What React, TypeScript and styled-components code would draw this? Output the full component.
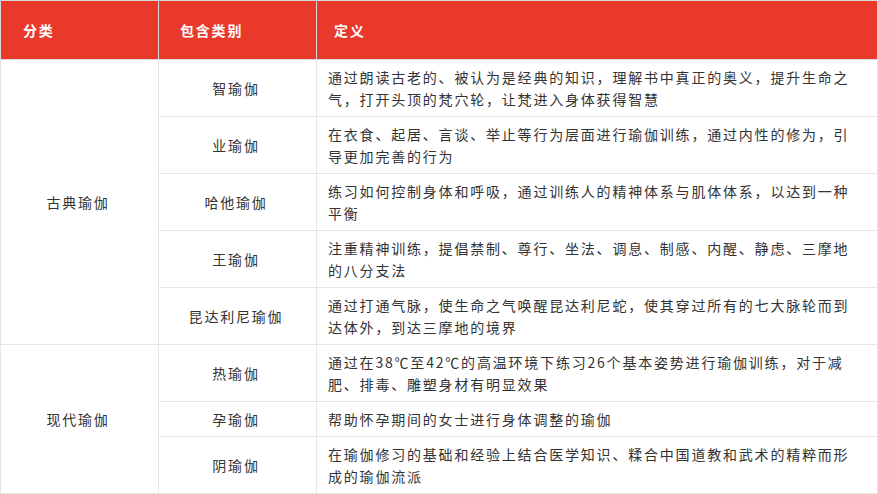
import React from "react";
import styled, { createGlobalStyle } from "styled-components";

const GlobalStyle = createGlobalStyle`
  html, body {
    margin: 0;
    padding: 0;
    background: #ffffff;
  }
  body {
    font-family: "Noto Sans CJK SC", "Noto Sans", sans-serif;
  }
`;

const StyledTable = styled.table`
  width: 878px;
  border-collapse: collapse;
  table-layout: fixed;
  font-size: 14px;
  letter-spacing: 1.8px;
  color: #333333;
  border: 1px solid #dcdcdc;
`;

const StyledCol = styled.col<{ $width?: number }>`
  width: ${(p) => (p.$width ? `${p.$width}px` : "auto")};
`;

const StyledHeadCell = styled.th<{ $pad?: number }>`
  box-sizing: border-box;
  background-color: #e8392b;
  color: #ffffff;
  font-weight: 700;
  text-align: left;
  padding: 18px 10px 18px ${(p) => p.$pad ?? 20}px;
  line-height: 22px;
  border: 1px solid #d9d9d9;
`;

const StyledCell = styled.td<{ $center?: boolean }>`
  box-sizing: border-box;
  padding: 6px 14px 6px 11px;
  line-height: 22px;
  vertical-align: middle;
  text-align: ${(p) => (p.$center ? "center" : "left")};
  border: 1px solid #e6e6e6;
`;

type Row = { name: string; desc: string };
type Group = { category: string; rows: Row[] };

const groups: Group[] = [
  {
    category: "古典瑜伽",
    rows: [
      {
        name: "智瑜伽",
        desc: "通过朗读古老的、被认为是经典的知识，理解书中真正的奥义，提升生命之气，打开头顶的梵穴轮，让梵进入身体获得智慧",
      },
      {
        name: "业瑜伽",
        desc: "在衣食、起居、言谈、举止等行为层面进行瑜伽训练，通过内性的修为，引导更加完善的行为",
      },
      {
        name: "哈他瑜伽",
        desc: "练习如何控制身体和呼吸，通过训练人的精神体系与肌体体系，以达到一种平衡",
      },
      {
        name: "王瑜伽",
        desc: "注重精神训练，提倡禁制、尊行、坐法、调息、制感、内醒、静虑、三摩地的八分支法",
      },
      {
        name: "昆达利尼瑜伽",
        desc: "通过打通气脉，使生命之气唤醒昆达利尼蛇，使其穿过所有的七大脉轮而到达体外，到达三摩地的境界",
      },
    ],
  },
  {
    category: "现代瑜伽",
    rows: [
      {
        name: "热瑜伽",
        desc: "通过在38℃至42℃的高温环境下练习26个基本姿势进行瑜伽训练，对于减肥、排毒、雕塑身材有明显效果",
      },
      { name: "孕瑜伽", desc: "帮助怀孕期间的女士进行身体调整的瑜伽" },
      {
        name: "阴瑜伽",
        desc: "在瑜伽修习的基础和经验上结合医学知识、糅合中国道教和武术的精粹而形成的瑜伽流派",
      },
    ],
  },
];

const App = () => {
  return (
    <>
      <GlobalStyle />
      <StyledTable>
        <colgroup>
          <StyledCol $width={158} />
          <StyledCol $width={158} />
          <StyledCol />
        </colgroup>
        <thead>
          <tr>
            <StyledHeadCell $pad={22}>分类</StyledHeadCell>
            <StyledHeadCell $pad={21}>包含类别</StyledHeadCell>
            <StyledHeadCell $pad={17}>定义</StyledHeadCell>
          </tr>
        </thead>
        <tbody>
          {groups.map((g) =>
            g.rows.map((r, i) => (
              <tr key={r.name}>
                {i === 0 && (
                  <StyledCell $center rowSpan={g.rows.length}>
                    {g.category}
                  </StyledCell>
                )}
                <StyledCell $center>{r.name}</StyledCell>
                <StyledCell>{r.desc}</StyledCell>
              </tr>
            ))
          )}
        </tbody>
      </StyledTable>
    </>
  );
};

export default App;
